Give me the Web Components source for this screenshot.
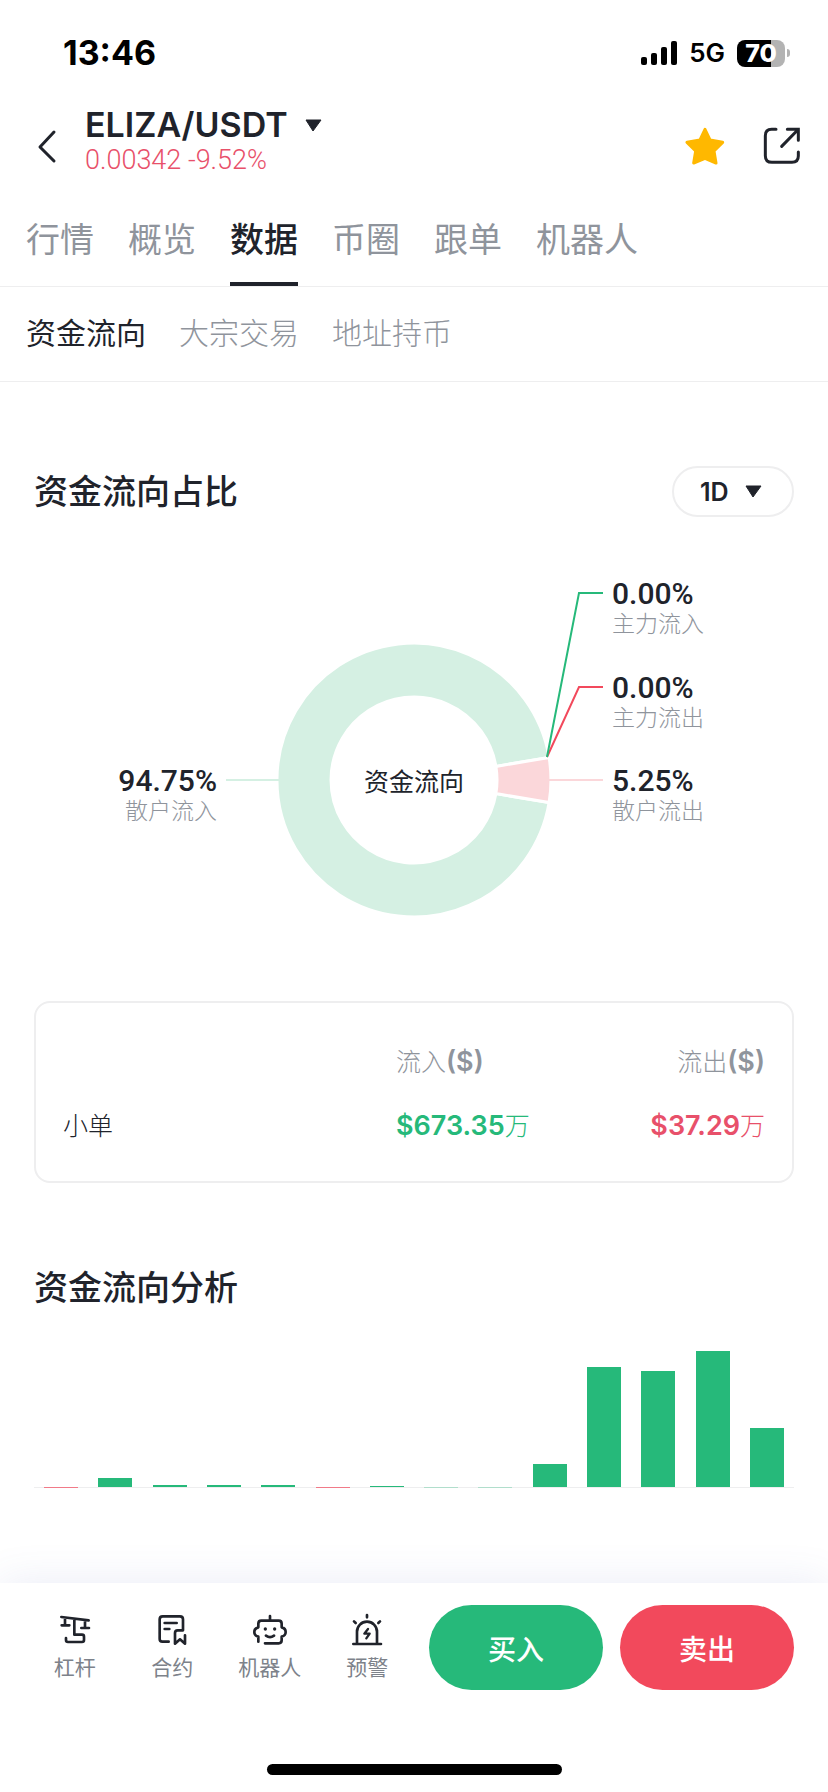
<!DOCTYPE html>
<html lang="zh-CN">
<head>
<meta charset="utf-8">
<meta name="viewport" content="width=device-width, initial-scale=1">
<title>ELIZA/USDT</title>
<style>
  :root {
    --ink: #20232b;
    --muted: #8f949c;
    --line: #eeeeef;
    --up: #26b97a;
    --down: #f2495c;
    --up-soft: #d5f0e3;
    --down-soft: #fbd7da;
    --latin: Inter, "Noto Sans CJK SC", sans-serif;
    --digits: Roboto, "Noto Sans CJK SC", sans-serif;
  }
  body {
    margin: 0;
    background: #fff;
    color: var(--ink);
    font-family: var(--latin);
  }
</style>
</head>
<body>

<app-screen>
  <status-bar slot="top" time="13:46" network="5G" battery="70"></status-bar>
  <pair-header slot="top" pair="ELIZA/USDT" price="0.00342" change="-9.52%"></pair-header>
  <tab-bar slot="top" label="页面" items="行情,概览,数据,币圈,跟单,机器人" active="数据"></tab-bar>
  <tab-bar slot="top" label="数据" variant="sub" items="资金流向,大宗交易,地址持币" active="资金流向"></tab-bar>

  <data-section heading="资金流向占比">
    <period-select slot="action"></period-select>
    <flow-donut></flow-donut>
    <flow-table></flow-table>
  </data-section>

  <data-section heading="资金流向分析" variant="next">
    <flow-bars values="-1,9,2,2,2,-1,1,0,0,23,120,116,136,59"></flow-bars>
  </data-section>

  <trade-bar slot="bottom"></trade-bar>
</app-screen>

<script>
// Base: renders the shadow root once the element is attached
class BaseElement extends HTMLElement {
  constructor() {
    super();
    this.shadow = this.attachShadow({ mode: 'open' });
  }

  connectedCallback() {
    this.render();
  }
}

class AppScreen extends BaseElement {
  render() {
    this.shadow.innerHTML = `
      <style>
        :host { display: flex; flex-direction: column; min-height: 100vh; }
        main { flex: 1; padding: 84px 34px 95px; }
        footer { position: sticky; bottom: 0; }
      </style>
      <header><slot name="top"></slot></header>
      <main><slot></slot></main>
      <footer><slot name="bottom"></slot></footer>
    `;
  }
}

class StatusBar extends BaseElement {
  render() {
    this.shadow.innerHTML = `
      <style>
        :host {
          display: flex;
          justify-content: space-between;
          align-items: center;
          padding: 36px 38px 0 63px;
          line-height: 34px;
          color: #000;
        }
        .time { font-size: 34px; font-weight: 700; }
        .right { display: flex; align-items: center; gap: 12px; }
        .network { font-size: 26px; font-weight: 600; }
        svg { display: block; }
        .battery { display: flex; align-items: center; gap: 2px; }
        .level {
          width: 48px;
          height: 27px;
          border-radius: 8px;
          background: linear-gradient(to right, #000 70%, #b3b3b3 70%);
          color: #fff;
          font-size: 25px;
          font-weight: 800;
          line-height: 27px;
          text-align: center;
        }
        .nub { width: 3px; height: 8px; border-radius: 0 3px 3px 0; background: #b3b3b3; }
      </style>
      <span class="time">${this.getAttribute('time')}</span>
      <div class="right">
        <svg width="36" height="24" viewBox="0 0 36 24" aria-hidden="true">
          <rect x="0" y="16" width="6" height="8" rx="2"/>
          <rect x="10" y="12" width="6" height="12" rx="2"/>
          <rect x="20" y="6" width="6" height="18" rx="2"/>
          <rect x="30" y="0" width="6" height="24" rx="2"/>
        </svg>
        <span class="network">${this.getAttribute('network')}</span>
        <div class="battery">
          <div class="level">${this.getAttribute('battery')}</div>
          <div class="nub"></div>
        </div>
      </div>
    `;
  }
}

class PairHeader extends BaseElement {
  render() {
    this.shadow.innerHTML = `
      <style>
        :host { display: flex; align-items: flex-end; padding: 35px 26px 0 34px; }
        button {
          display: flex;
          align-items: center;
          padding: 0;
          border: 0;
          background: none;
          color: inherit;
          font: inherit;
          cursor: pointer;
        }
        svg { display: block; }
        .icon { height: 58px; }
        .info { flex: 1; margin-left: 24px; }
        h1 { margin: 0; }
        .pair { gap: 17px; font-size: 34px; font-weight: 600; line-height: 40px; }
        .price { color: #e8506a; font-family: var(--digits); font-size: 27px; font-weight: 300; line-height: 30px; }
        .actions { display: flex; gap: 37px; }
      </style>
      <button class="icon" aria-label="返回">
        <svg width="27" height="40" viewBox="0 0 27 40"><path d="M20 6 6 21l14 14" fill="none" stroke="#20232b" stroke-width="3" stroke-linecap="round" stroke-linejoin="round"/></svg>
      </button>
      <div class="info">
        <h1><button class="pair">${this.getAttribute('pair')}
          <svg width="17" height="13" viewBox="0 0 17 13" aria-hidden="true"><path d="M1 1h15L8 12z" fill="#20232b" stroke="#20232b" stroke-linejoin="round"/></svg>
        </button></h1>
        <div class="price">${this.getAttribute('price')} ${this.getAttribute('change')}</div>
      </div>
      <div class="actions">
        <button class="icon" aria-label="收藏">
          <svg width="40" height="40" viewBox="813 381 120 120"><path d="M873 391 888 423 926 430 900 456 906 492 873 478 839 492 845 456 819 430 858 423z" fill="#ffb800" stroke="#ffb800" stroke-width="9" stroke-linejoin="round"/></svg>
        </button>
        <button class="icon" aria-label="分享">
          <svg width="40" height="40" viewBox="1042 381 120 120" fill="none" stroke="#20232b" stroke-width="9" stroke-linecap="round" stroke-linejoin="miter">
            <path d="M1084 391h-13q-19 0-19 19v60q0 20 20 20h60q19 0 19-19v-12"/>
            <path d="M1118 391h33v33M1149 393l-48 49"/>
          </svg>
        </button>
      </div>
    `;
  }
}

class TabBar extends BaseElement {
  render() {
    const active = this.getAttribute('active');
    const links = this.getAttribute('items').split(',').map(item =>
      `<a href="#" ${item === active ? 'aria-current="page"' : ''}>${item}</a>`
    ).join('');

    this.shadow.innerHTML = `
      <style>
        :host { display: block; border-bottom: 1px solid var(--line); }
        nav { display: flex; gap: 34px; padding: 40px 26px 0; }
        a {
          padding-bottom: 17px;
          border-bottom: 4px solid transparent;
          color: var(--muted);
          font-size: 34px;
          font-weight: 400;
          line-height: 50px;
          text-decoration: none;
          white-space: nowrap;
        }
        a[aria-current] { color: var(--ink); border-color: var(--ink); font-weight: 500; }
        :host([variant="sub"]) nav { gap: 33px; padding: 26px 26px 28px; }
        :host([variant="sub"]) a {
          padding: 0;
          border: 0;
          font-size: 30px;
          font-weight: 300;
          line-height: 40px;
        }
        :host([variant="sub"]) a[aria-current] { font-weight: 400; }
      </style>
      <nav aria-label="${this.getAttribute('label')}">${links}</nav>
    `;
  }
}

class DataSection extends BaseElement {
  render() {
    this.shadow.innerHTML = `
      <style>
        :host { display: block; }
        :host([variant="next"]) { margin-top: 80px; }
        .head { display: flex; justify-content: space-between; align-items: center; }
        h2 { margin: 0; font-size: 34px; font-weight: 500; line-height: 50px; }
      </style>
      <section>
        <div class="head"><h2>${this.getAttribute('heading')}</h2><slot name="action"></slot></div>
        <slot></slot>
      </section>
    `;
  }
}

class PeriodSelect extends BaseElement {
  render() {
    this.shadow.innerHTML = `
      <style>
        :host { display: grid; align-items: center; }
        select, svg { grid-area: 1 / 1; }
        select {
          appearance: none;
          width: 122px;
          height: 51px;
          padding: 0 0 0 26px;
          border: 2px solid var(--line);
          border-radius: 26px;
          background: #fff;
          color: var(--ink);
          font-family: var(--latin);
          font-size: 25px;
          font-weight: 600;
        }
        svg { justify-self: end; margin-right: 32px; pointer-events: none; }
      </style>
      <select aria-label="周期">
        <option>1D</option>
      </select>
      <svg width="17" height="13" viewBox="0 0 17 13" aria-hidden="true"><path d="M1 1h15L8 12z" fill="#20232b" stroke="#20232b" stroke-linejoin="round"/></svg>
    `;
  }
}

class FlowDonut extends BaseElement {
  // Point on a circle around the centre of the ring, angle in degrees
  point(radius, angle) {
    const rad = angle * Math.PI / 180;
    return `${(380 + radius * Math.cos(rad)).toFixed(1)} ${(220 + radius * Math.sin(rad)).toFixed(1)}`;
  }

  slice(from, to, color) {
    const large = to - from > 180 ? 1 : 0;
    return `<path fill="${color}" d="M${this.point(137, from)}
      A137 137 0 ${large} 1 ${this.point(137, to)}
      L${this.point(83, to)}
      A83 83 0 ${large} 0 ${this.point(83, from)}Z"/>`;
  }

  label(x, y, value, name, anchor = 'start') {
    return `<g text-anchor="${anchor}">
      <text class="value" x="${x}" y="${y + 11}">${value}</text>
      <text class="name" x="${x}" y="${y + 39}">${name}</text>
    </g>`;
  }

  render() {
    const half = 360 * 0.0525 / 2;

    this.shadow.innerHTML = `
      <style>
        :host { display: block; margin: 43px 0 41px; }
        svg { display: block; width: 100%; }
        .value { fill: var(--ink); font: 500 30px var(--digits); }
        .name { fill: var(--muted); font: 300 23px var(--latin); }
        .center { fill: var(--ink); font: 400 25px var(--latin); }
        .slices { stroke: #fff; stroke-width: 3; }
        .lines { fill: none; stroke-width: 2; }
      </style>
      <svg viewBox="0 0 760 400" role="img" aria-label="资金流向占比">
        <g class="slices">
          ${this.slice(half, 360 - half, 'var(--up-soft)')}
          ${this.slice(-half, half, 'var(--down-soft)')}
        </g>
        <g class="lines">
          <path d="M192 220h53" stroke="var(--up-soft)"/>
          <path d="M515 220h54" stroke="var(--down-soft)"/>
          <path d="M513 197 545 127h24" stroke="var(--down)"/>
          <path d="M513 197 545 33h24" stroke="var(--up)"/>
        </g>
        <text class="center" x="380" y="231" text-anchor="middle">资金流向</text>
        ${this.label(183, 220, '94.75%', '散户流入', 'end')}
        ${this.label(578, 33, '0.00%', '主力流入')}
        ${this.label(578, 127, '0.00%', '主力流出')}
        ${this.label(578, 220, '5.25%', '散户流出')}
      </svg>
    `;
  }
}

class FlowTable extends BaseElement {
  render() {
    this.shadow.innerHTML = `
      <style>
        :host {
          display: block;
          padding: 25px 27px;
          border: 2px solid var(--line);
          border-radius: 16px;
        }
        table { width: 100%; border-collapse: collapse; table-layout: fixed; font-size: 25px; }
        th, td { height: 64px; padding: 0; text-align: left; font-weight: 300; }
        th:first-child { width: 333px; }
        th:last-child, td:last-child { text-align: right; }
        thead { color: var(--muted); }
        b { font-size: 27px; font-weight: 600; }
        .in { color: var(--up); }
        .out { color: #e8506a; }
      </style>
      <table>
        <thead>
          <tr><th></th><th scope="col">流入<b>($)</b></th><th scope="col">流出<b>($)</b></th></tr>
        </thead>
        <tbody>
          <tr><th scope="row">小单</th><td class="in"><b>$673.35</b>万</td><td class="out"><b>$37.29</b>万</td></tr>
        </tbody>
      </table>
    `;
  }
}

class FlowBars extends BaseElement {
  render() {
    const values = this.getAttribute('values').split(',').map(Number);
    const max = Math.max(...values);
    const bars = values.map(v => {
      const kind = v < 0 ? 'down' : v === 0 ? 'flat' : 'up';
      return `<div><i class="${kind}" style="height: ${Math.abs(v) / max * 100}%"></i></div>`;
    }).join('');

    this.shadow.innerHTML = `
      <style>
        :host { display: flex; height: 136px; margin-top: 38px; border-bottom: 1px solid var(--line); }
        div { flex: 1; display: flex; align-items: flex-end; justify-content: center; }
        i { width: 34px; min-height: 1px; background: var(--up); }
        .down { background: var(--down); opacity: 0.7; margin-bottom: -1px; }
        .flat { opacity: 0.3; margin-bottom: -1px; }
      </style>
      ${bars}
    `;
  }
}

class TradeBar extends BaseElement {
  render() {
    this.shadow.innerHTML = `
      <style>
        :host {
          display: block;
          padding: 22px 0 17px;
          background: #fff;
          box-shadow: 0 0 40px rgba(80, 100, 190, 0.12);
        }
        .row { display: flex; align-items: center; padding: 0 34px 0 26px; }
        nav { flex: 390; display: flex; margin-right: 13px; }
        a {
          flex: 1;
          display: flex;
          flex-direction: column;
          align-items: center;
          gap: 6px;
          color: #7d828a;
          font-size: 21px;
          line-height: 30px;
          text-decoration: none;
          white-space: nowrap;
        }
        svg {
          width: 34px;
          height: 34px;
          fill: none;
          stroke: #20232b;
          stroke-width: 8;
          stroke-linecap: round;
          stroke-linejoin: round;
        }
        .trade { flex: 365; display: flex; gap: 17px; }
        button {
          flex: 1;
          height: 85px;
          border: 0;
          border-radius: 43px;
          color: #fff;
          font-family: var(--latin);
          font-size: 28px;
          font-weight: 500;
          cursor: pointer;
        }
        .buy { background: var(--up); }
        .sell { background: var(--down); }
        .home { width: 295px; height: 11px; margin: 74px auto 0; border-radius: 6px; background: #000; }
      </style>
      <div class="row">
        <nav aria-label="快捷入口">
          <a href="#">
            <svg viewBox="173 70 102 102" aria-hidden="true"><path d="M183 82 265 92M194 84v23M184 107h23M254 92v23M243 115h23M222 88v47h23q6 0 6 6v10q0 6-6 6h-42q-6 0-6-6v-6"/></svg>
            杠杆
          </a>
          <a href="#">
            <svg viewBox="464 70 102 102" aria-hidden="true"><path d="M505 156h-19q-8 0-8-8V89q0-9 9-9h52q9 0 9 9v33M493 100h36M493 118h14M548 122h-16q-8 0-8 8v32l15-13 15 13v-25"/></svg>
            合约
          </a>
          <a href="#">
            <svg viewBox="758 70 102 102" aria-hidden="true"><path d="M774 156v-15q-12-3-12-14t12-14v-11q0-9 9-9h52q9 0 9 9v11q12 3 12 14t-12 14v11q0 9-9 9h-41M809 79v13M797 138q12 9 24 0"/><path d="M795 118h0M823 118h0" stroke-width="10"/></svg>
            机器人
          </a>
          <a href="#">
            <svg viewBox="1051 70 102 102" aria-hidden="true"><path d="M1061 163h83M1072 163v-37a30 30 0 0 1 60 0v37M1102 76v7M1063 95l5 5M1141 95l-5 5"/><path d="M1105 118l-11 14h16l-10 14" stroke-width="7"/></svg>
            预警
          </a>
        </nav>
        <div class="trade">
          <button class="buy">买入</button>
          <button class="sell">卖出</button>
        </div>
      </div>
      <div class="home"></div>
    `;
  }
}

customElements.define('app-screen', AppScreen);
customElements.define('status-bar', StatusBar);
customElements.define('pair-header', PairHeader);
customElements.define('tab-bar', TabBar);
customElements.define('data-section', DataSection);
customElements.define('period-select', PeriodSelect);
customElements.define('flow-donut', FlowDonut);
customElements.define('flow-table', FlowTable);
customElements.define('flow-bars', FlowBars);
customElements.define('trade-bar', TradeBar);
</script>
</body>
</html>
